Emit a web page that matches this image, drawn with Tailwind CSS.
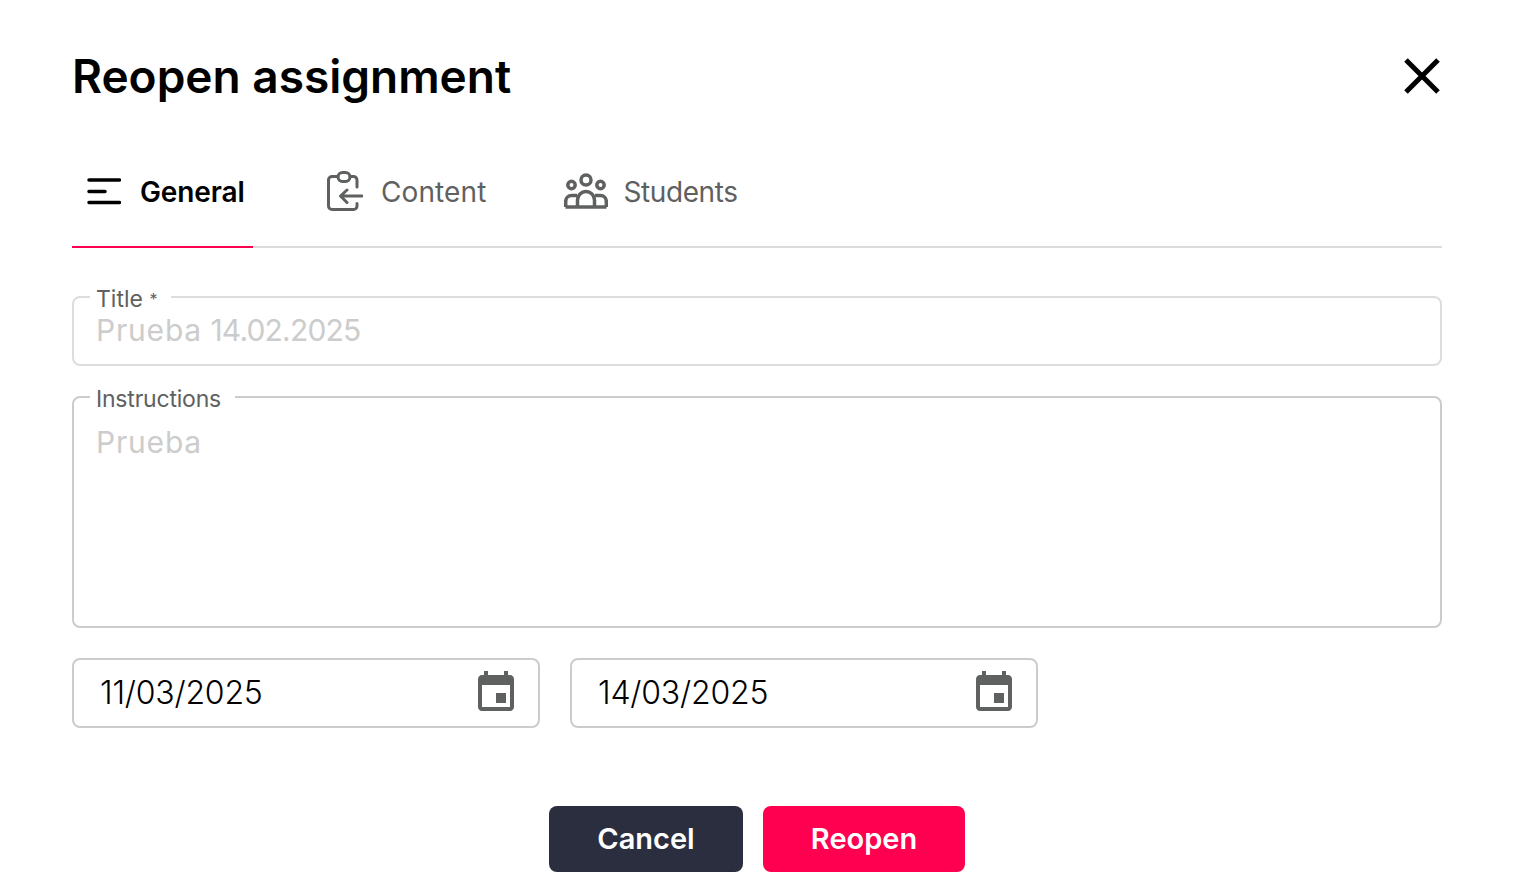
<!DOCTYPE html>
<html lang="en">
<head>
  <meta charset="UTF-8">
  <title>Reopen assignment</title>
  <script src="https://cdn.jsdelivr.net/npm/@tailwindcss/browser@4"></script>
</head>
<body class="bg-white h-[894px] overflow-hidden font-['Inter',sans-serif]">
  <div class="pl-[72px] pr-[74px]">
    <!-- Header -->
    <div class="flex items-center justify-between h-[60px] mt-[46px]">
      <h1 class="text-[46px] font-semibold text-black leading-none">Reopen assignment</h1>
      <svg class="w-10 h-10 mt-0.5 text-black" viewBox="0 0 40 40" fill="none" stroke="currentColor" stroke-width="5">
        <path d="M4 3 L36 35 M36 3 L4 35"/>
      </svg>
    </div>

    <!-- Tabs -->
    <div class="flex h-[113px] mt-[29px] border-b-2 border-[#dcdcdc] items-stretch text-[28px]">
      <div class="w-[181px] -mb-0.5 border-b-2 border-[#ff0050] flex items-center pl-[15px] gap-[19px] font-semibold text-black">
        <svg class="w-[34px] h-[28px] shrink-0" viewBox="0 0 34 28" fill="none" stroke="currentColor" stroke-width="3.5" stroke-linecap="round">
          <path d="M2 3H32.5M2 14.500H18M2 25.500H32.500"/>
        </svg>
        <span class="mt-[3px] tracking-[-0.1px]">General</span>
      </div>
      <div class="ml-[74px] flex items-center gap-[18px] text-[#5f6161]">
        <svg class="w-[36px] h-[40px] shrink-0" viewBox="0 0 36 40" fill="none" stroke="currentColor" stroke-width="3" stroke-linejoin="round" stroke-linecap="round">
          <path d="M11 5.500H5a3.500 3.500 0 0 0-3.500 3.500V35a3.500 3.500 0 0 0 3.500 3.500H26.500a3.500 3.500 0 0 0 3.500-3.500V32.500M30 16V9a3.500 3.500 0 0 0-3.500-3.500H23"/>
          <rect x="11" y="1.500" width="12" height="9" rx="4.500"/>
          <path d="M35 25H14M20 19L13.500 25L20 31.500"/>
        </svg>
        <span class="mt-[3px] tracking-[0.1px]">Content</span>
      </div>
      <div class="ml-[78px] flex items-center gap-[15px] text-[#5f6161]">
        <svg class="w-[44px] h-[36px] shrink-0" viewBox="0 0 44 36" fill="none" stroke="currentColor" stroke-width="3.500">
          <circle cx="22" cy="7" r="5"/>
          <circle cx="7.500" cy="12" r="3.700"/>
          <circle cx="36.500" cy="12" r="3.700"/>
          <path d="M1.500 34H42.500"/>
          <path d="M13.500 34V27a8.500 8.500 0 0 1 17 0V34"/>
          <path d="M1.700 34V28.500c0-3.500 2.500-6 6-6H13M42.300 34V28.500c0-3.500-2.500-6-6-6H31"/>
        </svg>
        <span class="mt-[3px] tracking-[-0.4px]">Students</span>
      </div>
    </div>

    <!-- Title -->
    <fieldset class="mt-[36px] h-[82px] border-2 border-[#dddddd] rounded-lg px-4">
      <legend class="pl-1.5 pr-3.5 text-[23px] leading-[26px] text-[#5f6161]"><span class="relative top-0.5">Title <span class="text-[16px] align-top">*</span></span></legend>
      <div class="pl-1.5 text-[30px] leading-[40px] text-[#cccccc]"><span class="tracking-[0.8px]">Prueba</span> <span class="tracking-[-0.8px]">14.02.2025</span></div>
    </fieldset>

    <!-- Instructions -->
    <fieldset class="mt-[18px] h-[244px] border-2 border-[#cccccc] rounded-lg px-4">
      <legend class="pl-1.5 pr-3.5 text-[23px] leading-[26px] tracking-[-0.2px] text-[#5f6161]"><span class="relative top-0.5">Instructions</span></legend>
      <div class="pl-1.5 text-[30px] leading-[40px] mt-[12px] tracking-[0.8px] text-[#cccccc]">Prueba</div>
    </fieldset>

    <!-- Dates -->
    <div class="flex gap-[30px] mt-[30px]">
      <div class="w-[468px] h-[70px] border-2 border-[#cccccc] rounded-lg flex items-center justify-between pl-[26px] pr-[18px]">
        <span class="text-[32px] font-light tracking-[-0.2px] text-black">11/03/2025</span>
        <svg class="w-12 h-12 text-[#5f6161]" viewBox="0 0 24 24" fill="currentColor"><path d="M17 12h-5v5h5v-5zM16 1v2H8V1H6v2H5c-1.110 0-1.990.9-1.990 2L3 19c0 1.100.89 2 2 2h14c1.100 0 2-.9 2-2V5c0-1.100-.9-2-2-2h-1V1h-2zm3 18H5V8h14v11z"/></svg>
      </div>
      <div class="w-[468px] h-[70px] border-2 border-[#cccccc] rounded-lg flex items-center justify-between pl-[26px] pr-[18px]">
        <span class="text-[32px] font-light tracking-[-0.2px] text-black">14/03/2025</span>
        <svg class="w-12 h-12 text-[#5f6161]" viewBox="0 0 24 24" fill="currentColor"><path d="M17 12h-5v5h5v-5zM16 1v2H8V1H6v2H5c-1.110 0-1.990.9-1.990 2L3 19c0 1.100.89 2 2 2h14c1.100 0 2-.9 2-2V5c0-1.100-.9-2-2-2h-1V1h-2zm3 18H5V8h14v11z"/></svg>
      </div>
    </div>

    <!-- Actions -->
    <div class="flex justify-center gap-5 mt-[78px]">
      <button class="w-[194px] h-[66px] rounded-lg bg-[#2b2e3e] text-white text-[29px] font-semibold">Cancel</button>
      <button class="w-[202px] h-[66px] rounded-lg bg-[#ff0050] text-white text-[29px] font-semibold">Reopen</button>
    </div>
  </div>
</body>
</html>
